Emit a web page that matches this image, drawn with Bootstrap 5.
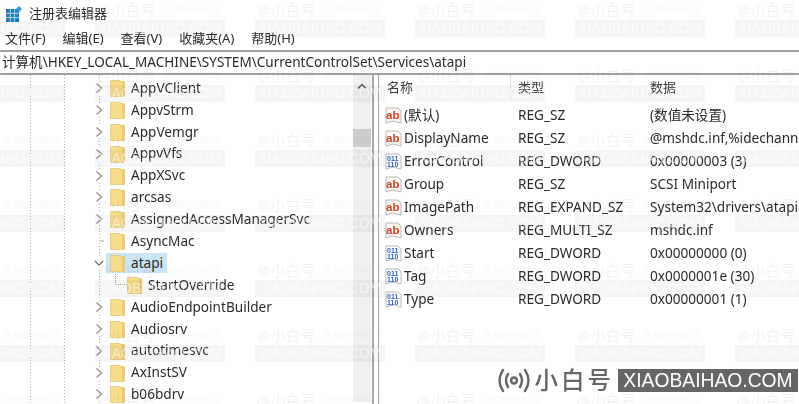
<!DOCTYPE html>
<html lang="zh-CN">
<head>
    <meta charset="UTF-8">
    <meta name="viewport" content="width=device-width, initial-scale=1.0">
    <title>注册表编辑器</title>
    <link href="https://cdn.jsdelivr.net/npm/bootstrap@5.3.0/dist/css/bootstrap.min.css" rel="stylesheet">
    <style>
        html, body { width: 799px; height: 404px; overflow: hidden; background: #fff; }
        body { font-family: "Noto Sans", "Noto Sans CJK SC", sans-serif; font-size: 13.6px; line-height: 1.2; color: #2b2b2b; }
        .app-win { width: 799px; height: 404px; overflow: hidden; filter: blur(.35px); }
        .title-bar { height: 27px; padding-left: 6px; gap: 7px; font-size: 13px; }
        .menu-bar { height: 23px; padding-left: 5px; gap: 17px; font-size: 13px; }
        .addr-bar { height: 25px; padding-left: 2px; border-top: 2px solid #a0a0a0; border-bottom: 2px solid #a0a0a0; font-size: 13.55px; white-space: nowrap; }
        .panes { height: 329px; }
        .tree-pane { width: 372px; height: 329px; padding-top: 2px;
            background-image: linear-gradient(#b4b4b4 50%, transparent 50%), linear-gradient(#b4b4b4 50%, transparent 50%), linear-gradient(#b4b4b4 50%, transparent 50%);
            background-size: 1px 3px; background-repeat: repeat-y; background-position: 30px 0, 64px 0, 99px 0; }
        .tree-rows { width: 353px; }
        .tree-row { height: 21.9px; padding-left: 94px; white-space: nowrap; }
        .tree-row .chev { width: 10px; margin-right: 6px; flex: none; background: #fff; }
        .tree-row.no-chev .chev { background: none; }
        .tree-row .fold { width: 15px; height: 18px; flex: none; margin-right: 6px; }
        .tree-row.child { padding-left: 115px; }
        .tree-row.child .chev { width: 12px; height: 11px; margin: -11px 0 0; background: none; border-left: 1px dotted #999; border-bottom: 1px dotted #999; }
        .tree-row.sel .lbl { background: #cce4f7; margin-left: -25px; padding: 2px 4px 2px 25px; }
        .tree-row.sel .fold { position: relative; z-index: 1; }
        .scroll-col { width: 18px; height: 327px; background: #f0f0f0; margin-top: -2px; padding-top: 8px; }
        .scroll-thumb { width: 18px; height: 18px; background: #cdcdcd; margin-top: 39px; }
        .split-bar { width: 7px; border-left: 2px solid #a8a8a8; border-right: 1px solid #a8a8a8; background: #fff; }
        .list-pane { width: 420px; overflow: hidden; }
        .list-head { height: 29px; color: #3c3c3c; font-size: 13px; }
        .list-head .col-name { border-right: 1px solid #e5e5e5; height: 25px; margin-bottom: 4px; }
        .list-head > div:not(.col-name) { margin-bottom: 4px; }
        .col-name { width: 132px; padding-left: 8px; flex: none; height: 100%; display: flex; align-items: center; }
        .col-type { width: 139px; padding-left: 7px; flex: none; }
        .list-row { height: 23px; white-space: nowrap; }
        .list-row .col-name { padding-left: 6px; gap: 2px; }
        .mark-layer { position: absolute; left: -65px; top: 0; width: 960px; height: 404px; pointer-events: none; display: grid; grid-template-columns: repeat(6, 160px); grid-auto-rows: 65px; overflow: hidden; }
        .mark-tile { padding-left: 2px; white-space: nowrap; overflow: hidden; }
        .mark-at { font-size: 15px; color: rgba(0, 0, 0, .05); height: 20px; gap: 9px; }
        .mark-note { font-size: 7px; color: rgba(0, 0, 0, .04); }
        .mark-box { width: 130px; height: 17px; margin-left: -2px; background: rgba(0, 0, 0, .04); color: rgba(255, 255, 255, .55); font-family: "Liberation Sans", sans-serif; font-size: 14px; }
        .brand-logo { position: absolute; right: 1px; bottom: 12px; height: 23px; gap: 4px; color: #666; }
        .brand-name { font-size: 23.5px; letter-spacing: 3px; font-weight: 500; }
        .brand-site { background: #666; color: #fff; height: 23px; width: 180px; font-family: "Liberation Sans", sans-serif; font-size: 19.3px; }
    </style>
</head>
<body>
    <svg width="0" height="0" class="d-block">
        <symbol id="ico-fold" viewBox="0 0 15 18">
            <path d="M.5 1.5H10l1 1h3.5v15H.5z" fill="#f8dd8b" stroke="#e6c878" stroke-width=".8"/>
            <path d="M10 1.5 14.5 3v14.5H12V5z" fill="#edcb74"/>
        </symbol>
        <symbol id="ico-ab" viewBox="0 0 17 17">
            <path d="M1 1H13l3 3V16L8 14 1 16z" fill="#fdf6f2" stroke="#bdb6b2"/>
            <text x="1" y="11.500" font-family="Liberation Sans, sans-serif" font-size="11.500" font-weight="700" fill="#c4492a">ab</text>
        </symbol>
        <symbol id="ico-bin" viewBox="0 0 17 17">
            <path d="M1 1H13l3 3V16L8 14 1 16z" fill="#fff" stroke="#b9b9b9"/>
            <text x="2" y="7.500" font-family="Liberation Sans, sans-serif" font-size="7" font-weight="700" fill="#2f62b5">011</text>
            <text x="2" y="14" font-family="Liberation Sans, sans-serif" font-size="7" font-weight="700" fill="#2f62b5">110</text>
        </symbol>
    </svg>

    <div class="app-win d-flex flex-column position-relative">
        <div class="title-bar d-flex align-items-center">
            <svg width="16" height="16" viewBox="0 0 16 16">
                <rect x="0" y="3" width="13" height="13" fill="#1f7fb8"/>
                <path d="M4.300 3v13M8.600 3v13M0 7.300h13M0 11.600h13" stroke="#cfe6f3" stroke-width=".8"/>
                <path d="M13 0l3 3-3 3-3-3z" fill="#3a9ad0"/>
            </svg>
            <span>注册表编辑器</span>
        </div>
        <div class="menu-bar d-flex align-items-center">
            <span>文件(F)</span><span>编辑(E)</span><span>查看(V)</span><span>收藏夹(A)</span><span>帮助(H)</span>
        </div>
        <div class="addr-bar d-flex align-items-center">计算机\HKEY_LOCAL_MACHINE\SYSTEM\CurrentControlSet\Services\atapi</div>
        <div class="panes d-flex">
            <div class="tree-pane d-flex">
                <div class="tree-rows" id="tree"></div>
                <div class="scroll-col">
                    <svg class="d-block mx-auto" width="10" height="7" viewBox="0 0 10 7"><path d="M1 5.500 5 1.500 9 5.500" fill="none" stroke="#555" stroke-width="1.4"/></svg>
                    <div class="scroll-thumb"></div>
                </div>
            </div>
            <div class="split-bar"></div>
            <div class="list-pane">
                <div class="list-head d-flex align-items-center">
                    <div class="col-name">名称</div>
                    <div class="col-type">类型</div>
                    <div>数据</div>
                </div>
                <div id="values"></div>
            </div>
        </div>

        <div class="mark-layer" id="marks"></div>
        <div class="brand-logo d-flex align-items-center">
            <svg width="34" height="25" viewBox="0 0 34 25" fill="none" stroke="#666" stroke-width="2.4" stroke-linecap="round">
                <path d="M6 2Q-1 12.500 6 23M11 6Q7 12.500 11 19M23 6Q27 12.500 23 19M28 2Q35 12.500 28 23"/>
                <circle cx="17" cy="12.500" r="3"/>
            </svg>
            <span class="brand-name">小白号</span>
            <span class="brand-site d-flex align-items-center justify-content-center">XIAOBAIHAO.COM</span>
        </div>
    </div>

    <script>
        const treeItems = ["AppVClient", "AppvStrm", "AppVemgr", "AppvVfs", "AppXSvc", "arcsas", "AssignedAccessManagerSvc", "AsyncMac", "atapi", "StartOverride", "AudioEndpointBuilder", "Audiosrv", "autotimesvc", "AxInstSV", "b06bdrv"];
        const valueRows = [
            ["ab", "(默认)", "REG_SZ", "(数值未设置)"],
            ["ab", "DisplayName", "REG_SZ", "@mshdc.inf,%idechannel.devicedesc%"],
            ["bin", "ErrorControl", "REG_DWORD", "0x00000003 (3)"],
            ["ab", "Group", "REG_SZ", "SCSI Miniport"],
            ["ab", "ImagePath", "REG_EXPAND_SZ", "System32\\drivers\\atapi.sys"],
            ["ab", "Owners", "REG_MULTI_SZ", "mshdc.inf"],
            ["bin", "Start", "REG_DWORD", "0x00000000 (0)"],
            ["bin", "Tag", "REG_DWORD", "0x0000001e (30)"],
            ["bin", "Type", "REG_DWORD", "0x00000001 (1)"]
        ];

        function chevron(name) {
            if (name === "StartOverride") return "";
            if (name === "AsyncMac") return '<svg width="10" height="10"><path d="M6 5h4" stroke="#aaa"/></svg>';
            if (name === "atapi") return '<svg width="12" height="10" viewBox="0 0 12 10"><path d="M1 2.500 6 7.500 11 2.500" fill="none" stroke="#555" stroke-width="1.3"/></svg>';
            return '<svg width="10" height="12" viewBox="0 0 10 12"><path d="M2.500 1.500 7.500 6 2.500 10.500" fill="none" stroke="#9a9a9a" stroke-width="1.5"/></svg>';
        }

        document.getElementById("tree").innerHTML = treeItems.map((name) => {
            let cls = "tree-row d-flex align-items-center";
            if (name === "atapi") cls += " sel";
            if (name === "StartOverride") cls += " child";
            if (name === "AsyncMac") cls += " no-chev";
            return `<div class="${cls}"><span class="chev d-flex align-items-center">${chevron(name)}</span><svg class="fold"><use href="#ico-fold"/></svg><span class="lbl">${name}</span></div>`;
        }).join("");

        document.getElementById("values").innerHTML = valueRows.map((row) => `
            <div class="list-row d-flex align-items-center">
                <div class="col-name"><svg width="17" height="17"><use href="#ico-${row[0]}"/></svg><span>${row[1]}</span></div>
                <div class="col-type">${row[2]}</div>
                <div>${row[3]}</div>
            </div>`).join("");

        let tiles = "";
        for (let i = 0; i < 42; i++) {
            tiles += '<div class="mark-tile"><div class="mark-at d-flex align-items-center"><span>@小白号</span><span class="mark-note">关注更多科技生活</span></div><div class="mark-box d-flex align-items-center justify-content-center">XIAOBAIHAO.COM</div></div>';
        }
        document.getElementById("marks").innerHTML = tiles;
    </script>
    <script src="https://cdn.jsdelivr.net/npm/bootstrap@5.3.0/dist/js/bootstrap.bundle.min.js"></script>
</body>
</html>
